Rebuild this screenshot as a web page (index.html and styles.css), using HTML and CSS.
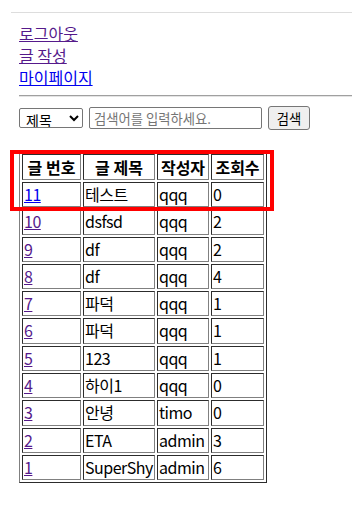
FILE: index.html
```html
<!DOCTYPE html>
<html>
<head>
	<meta charset="utf-8">
	<title>게시판</title>
	<link rel="stylesheet" href="styles.css">
</head>
<body>
	<div class="top-line"></div>
	<div class="nav">
		<a class="nav__link visited" href="#">로그아웃</a>
		<a class="nav__link visited" href="#">글 작성</a>
		<a class="nav__link" href="#">마이페이지</a>
	</div>
	<hr class="divider">
	<form class="search" onsubmit="return false">
		<select class="search__type">
			<option>제목</option>
			<option>내용</option>
			<option>작성자</option>
		</select>
		<input class="search__input" type="text" placeholder="검색어를 입력하세요.">
		<button class="search__btn" type="submit">검색</button>
	</form>
	<div class="board">
		<table class="board__table">
			<thead>
				<tr>
					<th class="col-no">글 번호</th>
					<th class="col-title">글 제목</th>
					<th class="col-writer">작성자</th>
					<th class="col-hit">조회수</th>
				</tr>
			</thead>
			<tbody class="board__body"></tbody>
		</table>
		<div class="board__mark"></div>
	</div>

	<script>
		const posts = [
			{ no: 11, title: '테스트', writer: 'qqq', hit: 0, fresh: true },
			{ no: 10, title: 'dsfsd', writer: 'qqq', hit: 2 },
			{ no: 9, title: 'df', writer: 'qqq', hit: 2 },
			{ no: 8, title: 'df', writer: 'qqq', hit: 4 },
			{ no: 7, title: '파덕', writer: 'qqq', hit: 1 },
			{ no: 6, title: '파덕', writer: 'qqq', hit: 1 },
			{ no: 5, title: '123', writer: 'qqq', hit: 1 },
			{ no: 4, title: '하이1', writer: 'qqq', hit: 0 },
			{ no: 3, title: '안녕', writer: 'timo', hit: 0 },
			{ no: 2, title: 'ETA', writer: 'admin', hit: 3 },
			{ no: 1, title: 'SuperShy', writer: 'admin', hit: 6 },
		];

		let rows = '';
		posts.forEach(item => {
			rows += `
				<tr>
					<td><a class="${item.fresh ? '' : 'visited'}" href="#">${item.no}</a></td>
					<td>${item.title}</td>
					<td>${item.writer}</td>
					<td>${item.hit}</td>
				</tr>
			`;
		});
		document.querySelector('.board__body').innerHTML = rows;
	</script>
</body>
</html>
```

FILE: styles.css
```css
* {
	box-sizing: border-box;
}
html {
	background: #FFFFFF;
}
body {
	margin: 0;
	font-family: "Noto Sans CJK KR", "Noto Sans", sans-serif;
	font-size: 16px;
	color: #000000;
}
a {
	color: #0000EE;
}
a.visited {
	color: #551A8B;
}

.top-line {
	height: 1px;
	margin: 12px 11px 0 11px;
	background: #dddddd;
}

.nav {
	display: flex;
	flex-direction: column;
	align-items: flex-start;
	margin: 9px 0 0 19px;
	line-height: 22px;
}

.divider {
	height: 0;
	margin: 7px 11px 0 19px;
	border: none;
	border-top: 1px solid #a0a0a0;
	border-bottom: 1px solid #e4e4e4;
}

.search {
	display: flex;
	align-items: center;
	gap: 6px;
	height: 24px;
	margin: 9px 0 0 19px;
	font-family: "Noto Sans CJK KR", sans-serif;
}
.search__type {
	width: 64px;
	height: 20px;
	padding: 0 0 0 2px;
	font-family: inherit;
	font-size: 14px;
	border: 1px solid #767676;
	border-radius: 2px;
	background: #ffffff;
	color: #000000;
}
.search__input {
	width: 173px;
	height: 22px;
	padding: 1px 4px;
	font-family: inherit;
	font-size: 13.33px;
	border: 1px solid #767676;
	border-radius: 2px;
}
.search__input::placeholder {
	color: #757575;
}
.search__btn {
	width: 42px;
	height: 24px;
	padding: 0;
	font-family: inherit;
	font-size: 13.33px;
	color: #000000;
	background: #efefef;
	border: 1px solid #767676;
	border-radius: 3px;
}

.board {
	position: relative;
	width: max-content;
	margin: 21px 0 0 19px;
}
.board__table {
	border: 1px outset #808080;
	border-spacing: 2px;
	box-sizing: content-box;
}
.board__table th,
.board__table td {
	box-sizing: content-box;
	padding: 1px;
	border: 1px inset #808080;
	text-align: left;
	white-space: nowrap;
}
.board__table th {
	line-height: 22px;
	font-weight: bold;
	text-align: center;
}
.board__table td {
	line-height: 21.3px;
	letter-spacing: -0.5px;
}
.col-no {
	width: 55px;
}
.col-title {
	width: 68px;
}
.col-writer {
	width: 48px;
}
.col-hit {
	width: 49px;
}

/* 위에 덧그린 빨간 표시 */
.board__mark {
	position: absolute;
	left: -9px;
	top: -1px;
	width: 264px;
	height: 61px;
	border: 4px solid #ff0000;
	pointer-events: none;
}
```
